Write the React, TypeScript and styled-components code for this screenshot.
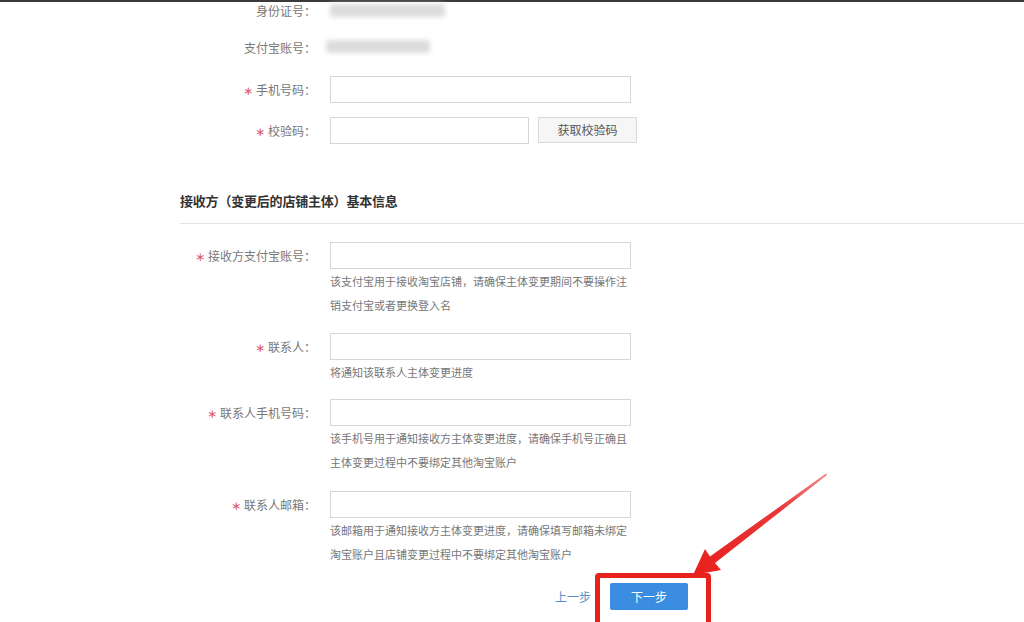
import React from "react";
import styled, { createGlobalStyle } from "styled-components";

const Global = createGlobalStyle`
  html, body { margin: 0; padding: 0; background: #fff; }
  body { font-family: "Noto Sans CJK SC", "Noto Sans", sans-serif; }
  * { box-sizing: border-box; }
`;

const Page = styled.div`
  position: relative;
  width: 1024px;
  height: 622px;
  overflow: hidden;
  background: #fff;
`;

const TopBar = styled.div`
  height: 2px;
  background: #3a3a3a;
`;

const Section = styled.div`
  display: flex;
  flex-direction: column;
`;

const Row = styled.div<{ $mt?: number; $mb?: number }>`
  display: flex;
  align-items: flex-start;
  margin-top: ${(p) => p.$mt ?? 0}px;
  margin-bottom: ${(p) => p.$mb ?? 0}px;
`;

const Label = styled.div<{ $h?: number }>`
  width: 316px;
  flex: none;
  text-align: right;
  font-size: 12px;
  line-height: ${(p) => p.$h ?? 27}px;
  height: ${(p) => p.$h ?? 27}px;
  color: #777;
  white-space: nowrap;
`;

const Star = styled.span`
  color: #e0566a;
  margin-right: 3px;
  font-size: 12px;
  font-family: "DejaVu Sans", sans-serif;
`;

const Field = styled.div<{ $ml?: number }>`
  margin-left: ${(p) => p.$ml ?? 14}px;
  display: flex;
  flex-direction: column;
`;

const Inline = styled.div`
  display: flex;
  align-items: flex-start;
`;

const Input = styled.div<{ $w?: number }>`
  width: ${(p) => p.$w ?? 301}px;
  height: 27px;
  border: 1px solid #d6d6d6;
  background: #fff;
`;

const CodeButton = styled.div`
  margin-left: 9px;
  width: 99px;
  height: 26px;
  border: 1px solid #d9d9d9;
  background: #f6f6f6;
  color: #555;
  font-size: 12px;
  line-height: 24px;
  text-align: center;
`;

const Blurred = styled.div<{ $w: number; $mt: number }>`
  width: ${(p) => p.$w}px;
  height: 13px;
  margin-top: ${(p) => p.$mt}px;
  background: #dcdcdc;
  filter: blur(2.5px);
  border-radius: 3px;
`;

const Help = styled.div`
  font-size: 11px;
  line-height: 24px;
  color: #777;
  white-space: nowrap;
`;

const Heading = styled.div`
  margin-top: 47px;
  margin-left: 180px;
  padding-bottom: 12px;
  border-bottom: 1px solid #e4e4e4;
  font-size: 13px;
  line-height: 20px;
  font-weight: 700;
  color: #333;
  letter-spacing: -0.2px;
`;

const Actions = styled.div`
  display: flex;
  align-items: center;
  padding-left: 555px;
  height: 27px;
`;

const PrevLink = styled.span`
  font-size: 12px;
  color: #5a8fc8;
`;

const NextButton = styled.div`
  margin-left: 19px;
  width: 78px;
  height: 27px;
  background: #3a8de0;
  color: #fff;
  font-size: 12px;
  line-height: 27px;
  text-align: center;
  border-radius: 2px;
`;

const Highlight = styled.div`
  position: absolute;
  left: 595px;
  top: 573px;
  width: 116px;
  height: 60px;
  border: 5px solid #e8211c;
  border-radius: 4px;
`;

const ArrowSvg = styled.svg`
  position: absolute;
  left: 0;
  top: 0;
  pointer-events: none;
`;

const Mark = () => <Star>∗</Star>;

export default function App() {
  return (
    <Page>
      <Global />
      <TopBar />
      <Section>
        <Row $mb={15}>
          <Label $h={17}>身份证号：</Label>
          <Field>
            <Blurred $w={115} $mt={2} />
          </Field>
        </Row>
        <Row $mb={15}>
          <Label>支付宝账号：</Label>
          <Field $ml={10}>
            <Blurred $w={104} $mt={6} />
          </Field>
        </Row>
        <Row $mb={14}>
          <Label>
            <Mark />手机号码：
          </Label>
          <Field>
            <Input />
          </Field>
        </Row>
        <Row>
          <Label>
            <Mark />校验码：
          </Label>
          <Field>
            <Inline>
              <Input $w={199} />
              <CodeButton>获取校验码</CodeButton>
            </Inline>
          </Field>
        </Row>
      </Section>

      <Heading>接收方（变更后的店铺主体）基本信息</Heading>

      <Section>
        <Row $mt={18} $mb={16}>
          <Label>
            <Mark />接收方支付宝账号：
          </Label>
          <Field>
            <Input />
            <Help>该支付宝用于接收淘宝店铺，请确保主体变更期间不要操作注</Help>
            <Help>销支付宝或者更换登入名</Help>
          </Field>
        </Row>
        <Row $mb={15}>
          <Label>
            <Mark />联系人：
          </Label>
          <Field>
            <Input />
            <Help>将通知该联系人主体变更进度</Help>
          </Field>
        </Row>
        <Row $mb={17}>
          <Label>
            <Mark />联系人手机号码：
          </Label>
          <Field>
            <Input />
            <Help>该手机号用于通知接收方主体变更进度，请确保手机号正确且</Help>
            <Help>主体变更过程中不要绑定其他淘宝账户</Help>
          </Field>
        </Row>
        <Row $mb={17}>
          <Label>
            <Mark />联系人邮箱：
          </Label>
          <Field>
            <Input />
            <Help>该邮箱用于通知接收方主体变更进度，请确保填写邮箱未绑定</Help>
            <Help>淘宝账户且店铺变更过程中不要绑定其他淘宝账户</Help>
          </Field>
        </Row>
        <Actions>
          <PrevLink>上一步</PrevLink>
          <NextButton>下一步</NextButton>
        </Actions>
      </Section>

      <Highlight />
      <ArrowSvg width="1024" height="622" viewBox="0 0 1024 622">
        <defs>
          <linearGradient id="arrowGrad" x1="826" y1="474" x2="693" y2="575" gradientUnits="userSpaceOnUse">
            <stop offset="0" stopColor="#f08a8a" />
            <stop offset="0.35" stopColor="#e8383a" />
            <stop offset="1" stopColor="#e8201c" />
          </linearGradient>
        </defs>
        <polygon
          points="693,575 705,549 710,556.5 826,473.5 827,475 715,563 721,570"
          fill="url(#arrowGrad)"
        />
      </ArrowSvg>
    </Page>
  );
}
